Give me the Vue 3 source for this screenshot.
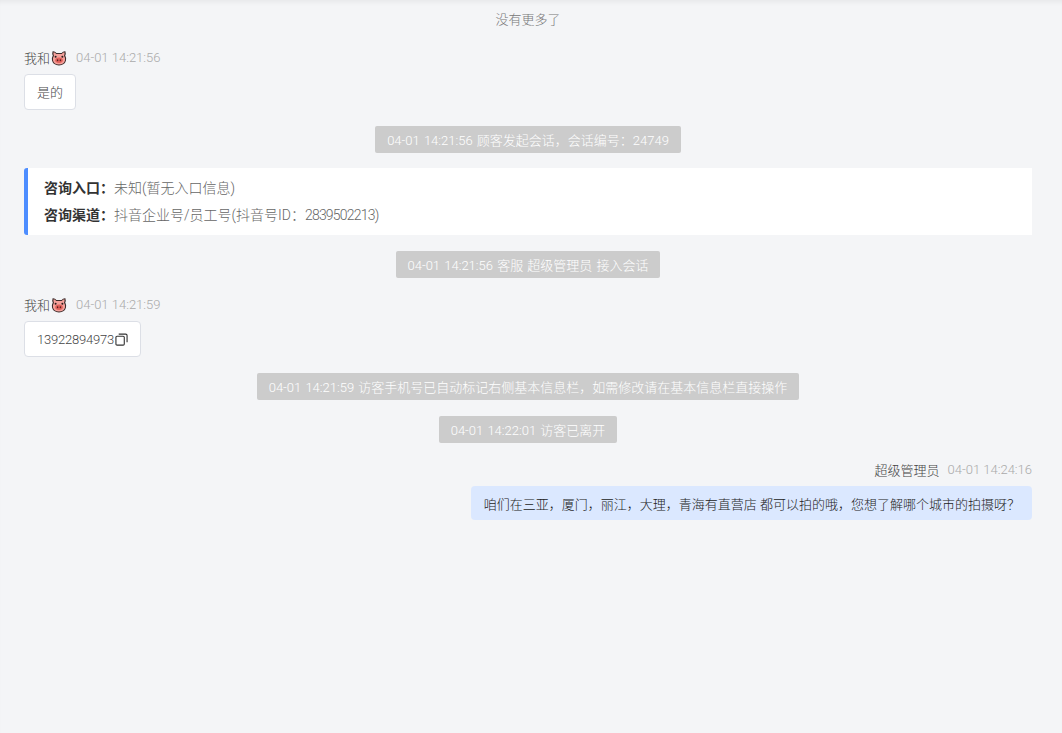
<script setup>
const guest = [
  { time: '04-01 14:21:56' },
  { time: '04-01 14:21:59', text: '13922894973' }
]
</script>

<template>
  <div class="chat">
    <svg class="defs" width="0" height="0">
      <symbol id="pig" viewBox="0 0 16 16">
        <path d="M1.6 1.2 Q4 .9 5.4 3 H10.6 Q12 .9 14.4 1.2 Q15.2 3.5 14.2 5.6 Q15.6 8 15 10.6 Q13.8 15.4 8 15.4 Q2.2 15.4 1 10.6 Q.4 8 1.8 5.6 Q.8 3.5 1.6 1.2 Z" fill="#3b2c2c" />
        <path d="M2.6 2.2 Q4.2 2.2 5.2 4 H10.8 Q11.8 2.2 13.4 2.2 Q13.9 4 13 5.8 Q14.5 8 14 10.4 Q13 14.4 8 14.4 Q3 14.4 2 10.4 Q1.5 8 3 5.8 Q2.1 4 2.6 2.2 Z" fill="#f4a09a" />
        <ellipse cx="8" cy="10.2" rx="3.8" ry="2.7" fill="#e2625c" />
        <ellipse cx="6.6" cy="10.2" rx=".8" ry="1" fill="#5a1f1f" />
        <ellipse cx="9.4" cy="10.2" rx=".8" ry="1" fill="#5a1f1f" />
        <circle cx="4.6" cy="6.8" r="1" fill="#2b1b1b" />
        <circle cx="11.4" cy="6.8" r="1" fill="#2b1b1b" />
      </symbol>
    </svg>

    <div class="no-more">没有更多了</div>

    <div class="msg">
      <div class="msg-head">
        <span class="name">我和</span>
        <svg class="pig"><use href="#pig" /></svg>
        <span class="time">{{ guest[0].time }}</span>
      </div>
      <div class="bubble">是的</div>
    </div>

    <div class="sys"><span>04-01 14:21:56 顾客发起会话，会话编号：24749</span></div>

    <div class="info-card">
      <div class="info-row"><b>咨询入口：</b>未知(暂无入口信息)</div>
      <div class="info-row"><b>咨询渠道：</b>抖音企业号/员工号(抖音号ID：<span class="num">2839502213</span>)</div>
    </div>

    <div class="sys"><span>04-01 14:21:56 客服 超级管理员 接入会话</span></div>

    <div class="msg">
      <div class="msg-head">
        <span class="name">我和</span>
        <svg class="pig"><use href="#pig" /></svg>
        <span class="time">{{ guest[1].time }}</span>
      </div>
      <div class="bubble">
        <span class="phone">{{ guest[1].text }}</span>
        <svg class="copy" viewBox="0 0 14 14" fill="none" stroke="#333" stroke-width="1.2">
          <rect x="1" y="3.5" width="9" height="9.5" rx="1.2" />
          <path d="M4 1.2 H11.5 Q13 1.2 13 2.7 V10" />
        </svg>
      </div>
    </div>

    <div class="sys"><span>04-01 14:21:59 访客手机号已自动标记右侧基本信息栏，如需修改请在基本信息栏直接操作</span></div>
    <div class="sys"><span>04-01 14:22:01 访客已离开</span></div>

    <div class="msg msg-self">
      <div class="msg-head">
        <span class="name">超级管理员</span>
        <span class="time">04-01 14:24:16</span>
      </div>
      <div class="bubble bubble-self">咱们在三亚，厦门，丽江，大理，青海有直营店 都可以拍的哦，您想了解哪个城市的拍摄呀？</div>
    </div>
  </div>
</template>

<style scoped>
.chat {
  box-sizing: border-box;
  height: 733px;
  padding: 0 30px 0 24px;
  background: #f4f5f7;
  box-shadow: inset 0 5px 5px -3px rgba(0, 0, 0, 0.06);
  font-family: Roboto, "Noto Sans CJK SC", sans-serif;
  font-size: 13px;
  font-weight: 300;
  color: #444;
  overflow: hidden;
}
.defs {
  position: absolute;
}
.no-more {
  height: 31px;
  padding-top: 10px;
  box-sizing: border-box;
  line-height: 19px;
  text-align: center;
  color: #777;
}
.msg {
  display: flex;
  flex-direction: column;
  align-items: flex-start;
  margin-top: 17px;
}
.msg-self {
  align-items: flex-end;
}
.msg-head {
  display: flex;
  align-items: center;
  height: 18px;
  margin-bottom: 8px;
}
.pig {
  width: 16px;
  height: 16px;
  margin-top: 2px;
  margin-left: 1px;
}
.time {
  margin-left: 9px;
  padding-top: 1px;
  color: #aaa;
}
.msg-self .time {
  margin-left: 8px;
}
.bubble {
  display: flex;
  align-items: center;
  box-sizing: border-box;
  height: 36px;
  padding: 0 12px 2px;
  background: #fff;
  border: 1px solid #dcdfe6;
  border-radius: 4px;
}
.phone {
  padding-top: 2px;
  letter-spacing: -0.2px;
}
.copy {
  width: 13px;
  height: 13px;
  margin-top: 2px;
  margin-left: 1px;
}
.bubble-self {
  height: 34px;
  padding: 0 12px 0 13px;
  background: #dbe8ff;
  border: 0;
  color: #222;
}
.sys {
  display: flex;
  justify-content: center;
  margin-top: 16px;
}
.sys span {
  padding: 2px 12px 0;
  line-height: 25px;
  background: #ccc;
  border-radius: 2px;
  color: #fff;
  word-spacing: 1px;
  white-space: nowrap;
}
.info-card {
  box-sizing: border-box;
  height: 67px;
  margin-top: 15px;
  padding: 7px 16px;
  background: #fff;
  border-left: 4px solid #4d8dff;
  border-radius: 3px 0 0 3px;
  font-size: 14px;
  color: #666;
}
.info-row {
  line-height: 27px;
}
.info-row b {
  color: #333;
  font-weight: 700;
}
.num {
  letter-spacing: -0.8px;
}
</style>

<style>
html, body {
  background: #f4f5f7;
}
</style>
